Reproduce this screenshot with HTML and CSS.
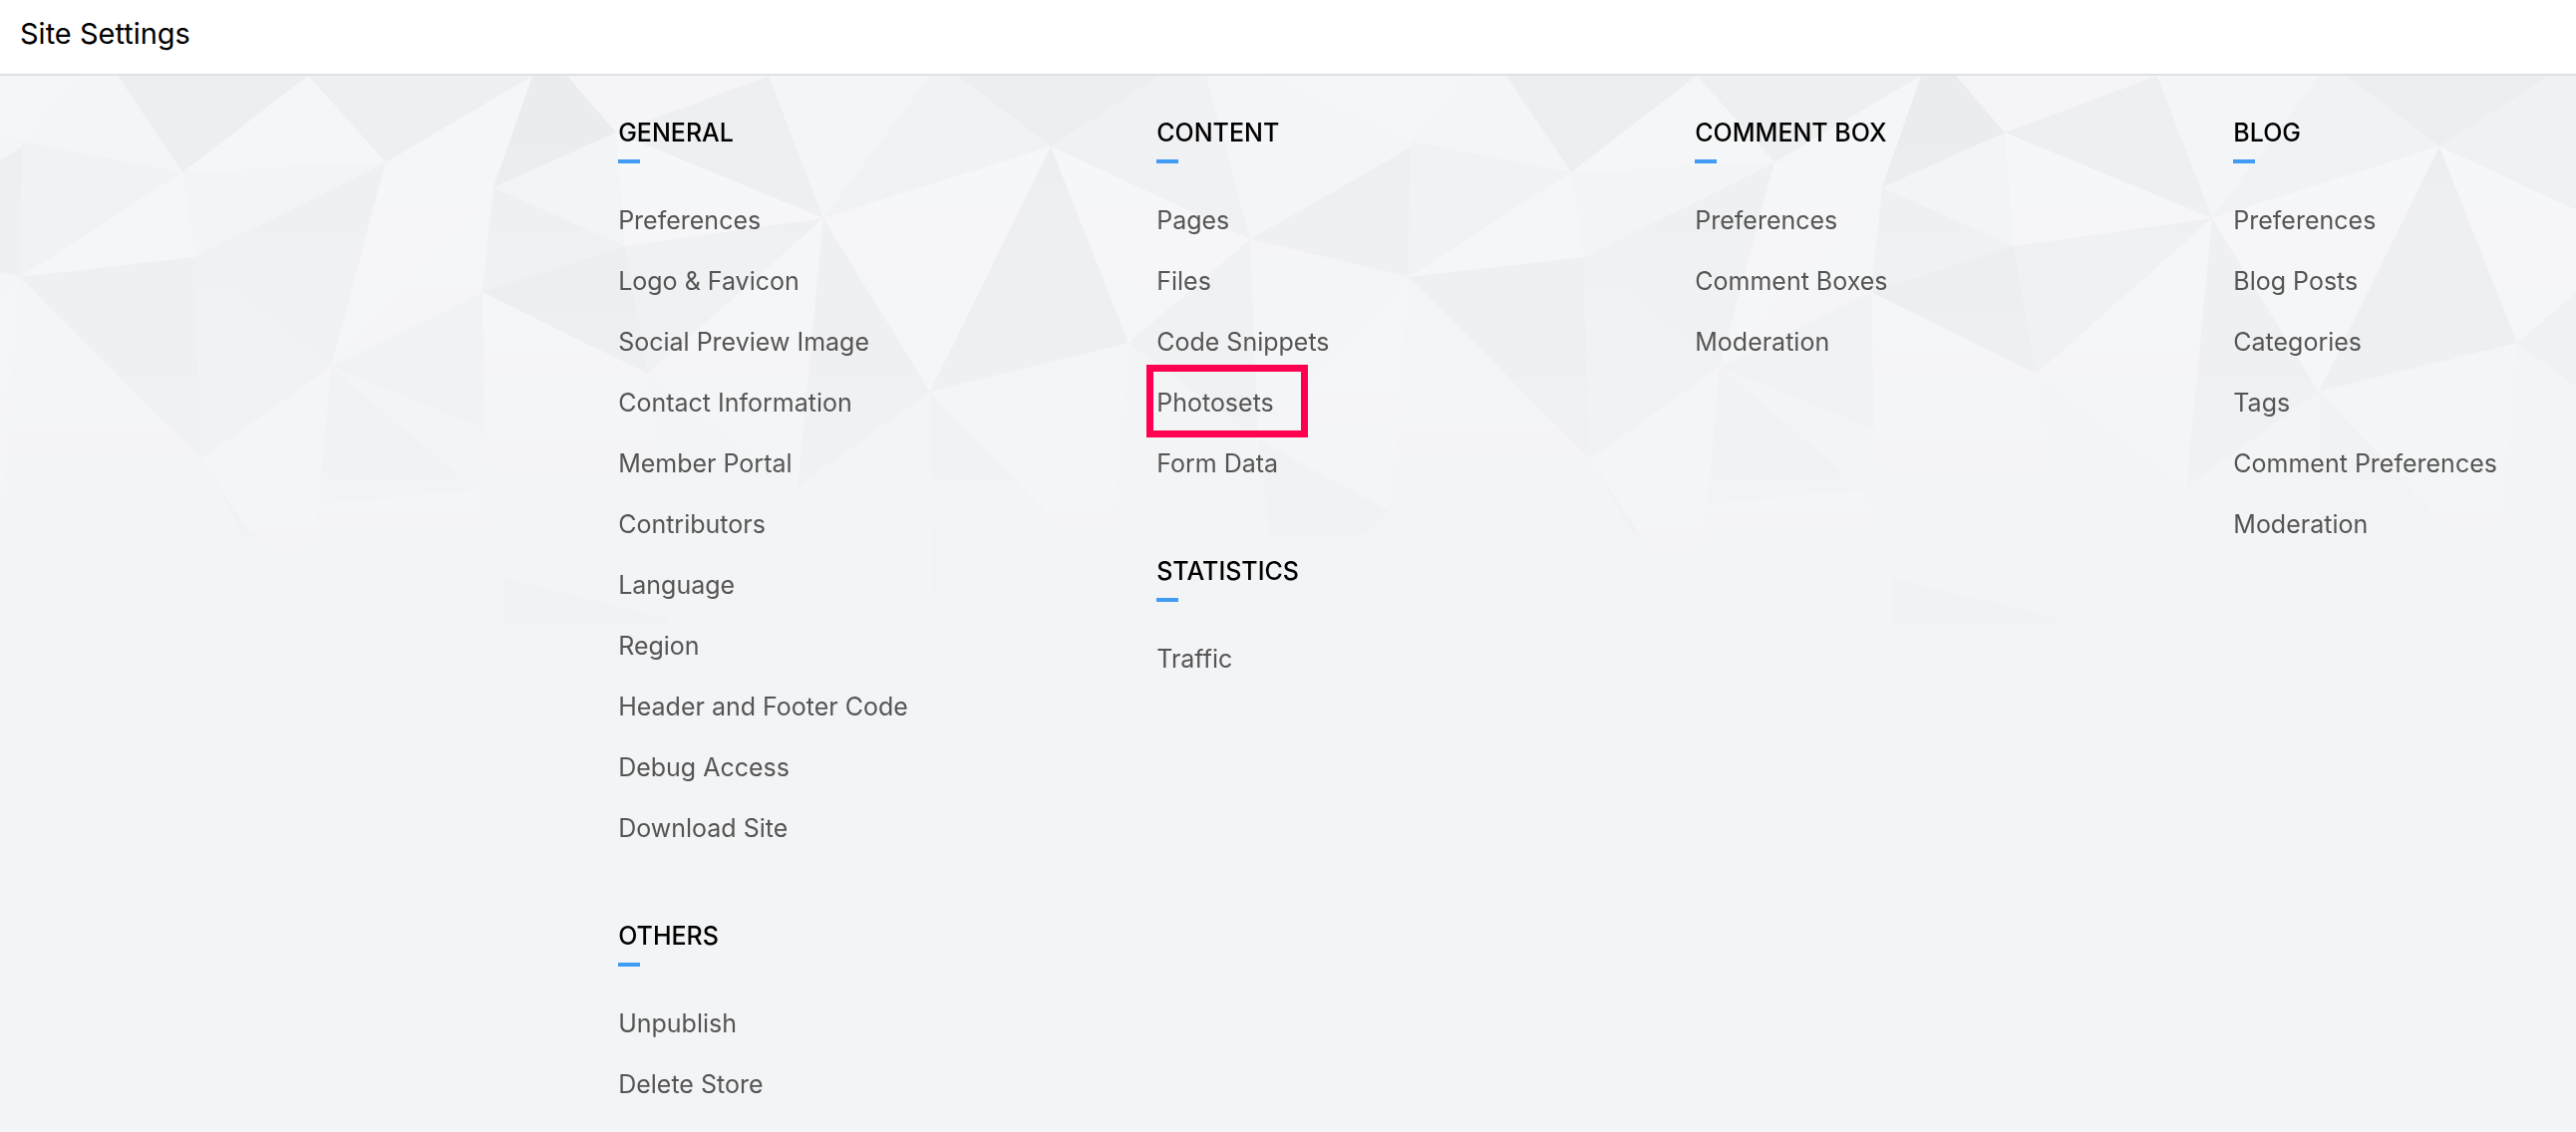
FILE: index.html
```html
<!DOCTYPE html>
<html lang="en">
<head>
    <meta charset="UTF-8">
    <meta name="viewport" content="width=device-width, initial-scale=1.0">
    <title>Site Settings</title>
    <link rel="stylesheet" href="styles.css">
</head>
<body>
    <header class="header">
        <h1>Site Settings</h1>
    </header>

    <main class="settings">
        <svg class="pattern" aria-hidden="true">
            <defs>
                <linearGradient id="fade" x1="0" y1="0" x2="0" y2="1">
                    <stop offset="0" stop-color="#fff"/>
                    <stop offset="0.4" stop-color="#fff" stop-opacity="0.8"/>
                    <stop offset="1" stop-color="#fff" stop-opacity="0"/>
                </linearGradient>
                <mask id="fade-mask">
                    <rect width="100%" height="100%" fill="url(#fade)"/>
                </mask>
                <!-- one tile, repeats every 1393px -->
                <g id="tile">
                    <g fill="#fff">
                        <path opacity=".2" d="M-125 0H80L22 66z"/>
                        <path opacity=".1" d="M80 0H118L183 97L22 66z"/>
                        <path opacity=".2" d="M309 0L387 87L183 97z"/>
                        <path opacity=".22" d="M534 0L495 112L387 87z"/>
                        <path opacity=".16" d="M569 0H771L618 57z"/>
                        <path opacity=".28" d="M618 57L826 143L627 171z"/>
                        <path opacity=".08" d="M618 57L627 171L495 112z"/>
                        <path opacity=".15" d="M771 0H933L826 143z"/>
                        <path opacity=".28" d="M1054 71L933 317L826 143z"/>
                        <path opacity=".28" d="M1054 71L1254 164L1132 268z"/>
                        <path opacity=".12" d="M1210 0H1268L1415 66V72L1254 164z"/>
                        <path opacity=".25" d="M183 97L196 182L20 202z"/>
                        <path opacity=".08" d="M183 97L387 87L196 182z"/>
                        <path opacity=".28" d="M387 87L495 112L332 292z"/>
                        <path opacity=".2" d="M495 112L484 217L332 292z"/>
                        <path opacity=".22" d="M484 217L650 299L487 355z"/>
                        <path opacity=".22" d="M826 143L800 413L650 299z"/>
                        <path opacity=".14" d="M20 202L202 385L1 437z"/>
                        <path opacity=".18" d="M1254 164L1413 202L1262 365z"/>
                        <path opacity=".25" d="M1413 202L1394 437L1262 365z"/>
                        <path opacity=".2" d="M1132 268L1111 504L933 317z"/>
                        <path opacity=".22" d="M332 292L308 545L202 385z"/>
                        <path opacity=".2" d="M476 415L505 504L308 545L320 430z"/>
                        <path opacity=".15" d="M650 299L673 502L505 504L487 355z"/>
                    </g>
                    <g fill="#101014">
                        <path opacity=".022" d="M118 0H309L183 97z"/>
                        <path opacity=".021" d="M309 0H534L387 87z"/>
                        <path opacity=".034" d="M534 0H569L618 57L495 112z"/>
                        <path opacity=".018" d="M771 0L826 143L618 57z"/>
                        <path opacity=".006" d="M933 0H960L1054 71L826 143z"/>
                        <path opacity=".022" d="M960 0H1165L1054 71z"/>
                        <path opacity=".012" d="M1165 0H1210L1254 164L1054 71z"/>
                        <path opacity=".006" d="M22 66L183 97L20 202z"/>
                        <path opacity=".02" d="M1415 72L1413 202L1254 164z"/>
                        <path opacity=".017" d="M387 87L332 292L196 182z"/>
                        <path opacity=".017" d="M495 112L627 171L484 217z"/>
                        <path opacity=".032" d="M627 171L650 299L484 217z"/>
                        <path opacity=".016" d="M826 143L650 299L627 171z"/>
                        <path opacity=".018" d="M826 143L933 317L800 413z"/>
                        <path opacity=".022" d="M1054 71L1132 268L933 317z"/>
                        <path opacity=".018" d="M196 182L202 385L20 202z"/>
                        <path opacity=".01" d="M196 182L332 292L202 385z"/>
                        <path opacity=".01" d="M484 217L487 355L332 292z"/>
                        <path opacity=".012" d="M332 292L476 415L320 430z"/>
                        <path opacity=".014" d="M1254 164L1262 365L1132 268z"/>
                        <path opacity=".014" d="M1262 365L1394 437L1283 542z"/>
                        <path opacity=".01" d="M933 317L1111 504L935 524z"/>
                        <path opacity=".014" d="M202 385L308 545L300 560z"/>
                        <path opacity=".03" d="M505 504L673 545L611 621H509z"/>
                    </g>
                </g>
            </defs>
            <g mask="url(#fade-mask)">
                <use href="#tile" x="-1393"/>
                <use href="#tile"/>
                <use href="#tile" x="1393"/>
            </g>
        </svg>

        <div class="columns">
            <div class="column">
                <section>
                    <h2>GENERAL</h2>
                    <ul>
                        <li><a href="#">Preferences</a></li>
                        <li><a href="#">Logo &amp; Favicon</a></li>
                        <li><a href="#">Social Preview Image</a></li>
                        <li><a href="#">Contact Information</a></li>
                        <li><a href="#">Member Portal</a></li>
                        <li><a href="#">Contributors</a></li>
                        <li><a href="#">Language</a></li>
                        <li><a href="#">Region</a></li>
                        <li><a href="#">Header and Footer Code</a></li>
                        <li><a href="#">Debug Access</a></li>
                        <li><a href="#">Download Site</a></li>
                    </ul>
                </section>
                <section>
                    <h2>OTHERS</h2>
                    <ul>
                        <li><a href="#">Unpublish</a></li>
                        <li><a href="#">Delete Store</a></li>
                    </ul>
                </section>
            </div>

            <div class="column">
                <section>
                    <h2>CONTENT</h2>
                    <ul>
                        <li><a href="#">Pages</a></li>
                        <li><a href="#">Files</a></li>
                        <li><a href="#">Code Snippets</a></li>
                        <li><a href="#" class="highlight">Photosets</a></li>
                        <li><a href="#">Form Data</a></li>
                    </ul>
                </section>
                <section>
                    <h2>STATISTICS</h2>
                    <ul>
                        <li><a href="#">Traffic</a></li>
                    </ul>
                </section>
            </div>

            <div class="column">
                <section>
                    <h2>COMMENT BOX</h2>
                    <ul>
                        <li><a href="#">Preferences</a></li>
                        <li><a href="#">Comment Boxes</a></li>
                        <li><a href="#">Moderation</a></li>
                    </ul>
                </section>
            </div>

            <div class="column">
                <section>
                    <h2>BLOG</h2>
                    <ul>
                        <li><a href="#">Preferences</a></li>
                        <li><a href="#">Blog Posts</a></li>
                        <li><a href="#">Categories</a></li>
                        <li><a href="#">Tags</a></li>
                        <li><a href="#">Comment Preferences</a></li>
                        <li><a href="#">Moderation</a></li>
                    </ul>
                </section>
            </div>
        </div>
    </main>
</body>
</html>
```
FILE: styles.css
```css
* {
    box-sizing: border-box;
}

body {
    margin: 0;
    min-height: 100vh;
    display: flex;
    flex-direction: column;
    font-family: Inter, "Liberation Sans", sans-serif;
    background: #f3f4f6;
    color: #000;
}

.header {
    padding: 18px 20px 24px;
    background: #fff;
    border-bottom: 2px solid #dee1e6;
}

h1 {
    margin: 0;
    font-size: 29px;
    line-height: 32px;
    font-weight: 400;
}

.settings {
    position: relative;
    flex: 1;
    padding: 41px 0 0 24%;
}

/* faceted backdrop behind the columns */
.pattern {
    position: absolute;
    top: 0;
    left: 0;
    width: 100%;
    height: 640px;
}

.columns {
    position: relative;
    display: grid;
    grid-template-columns: repeat(3, 27.5%) auto;
}

.column {
    display: flex;
    flex-direction: column;
    gap: 61px;
}

h2 {
    margin: 0 0 27px;
    font-size: 25px;
    line-height: 32px;
    font-weight: 500;
}

h2::after {
    content: "";
    display: block;
    width: 22px;
    height: 4px;
    margin-top: 11px;
    background: #409cf5;
}

ul {
    list-style: none;
    margin: 0;
    padding: 0;
}

li {
    font-size: 25px;
    line-height: 61px;
}

a {
    display: inline-block;
    color: #555;
    text-decoration: none;
}

a:hover {
    color: #409cf5;
}

.highlight {
    position: relative;
}

.highlight::after {
    content: "";
    position: absolute;
    inset: -8px -34px -4px -10px;
    border: 7px solid #ff0050;
}
```
